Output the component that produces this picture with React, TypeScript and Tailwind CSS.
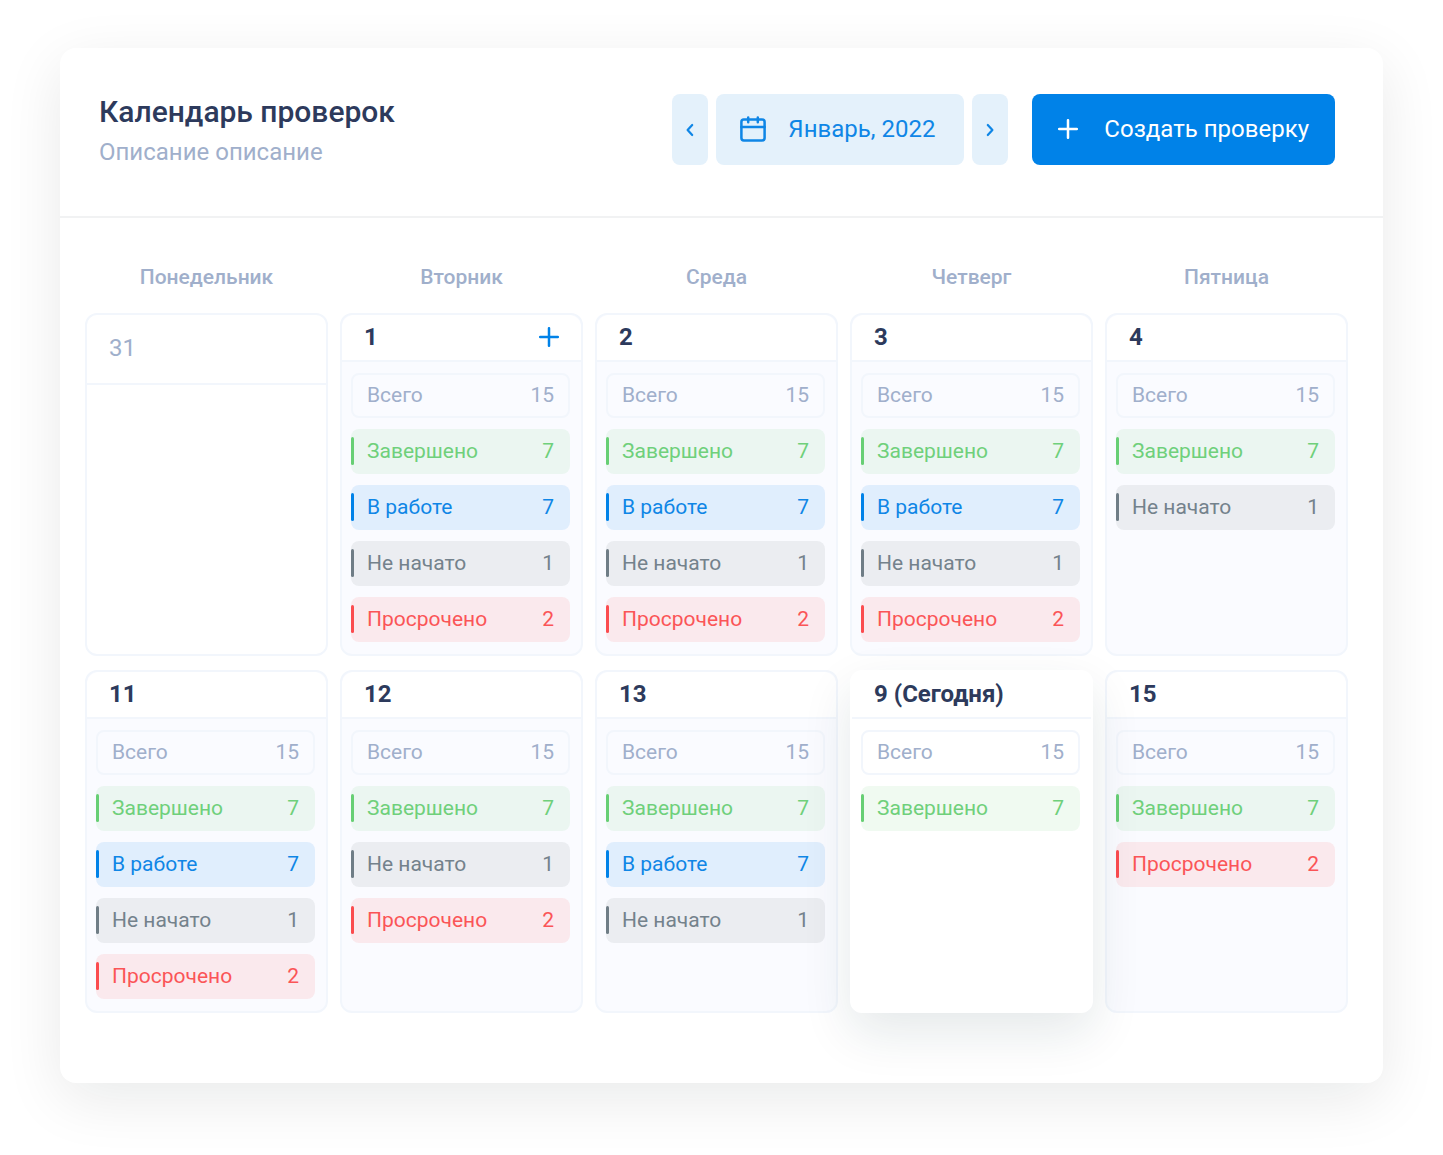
import { useState } from 'react';

type Status = 'total' | 'done' | 'progress' | 'idle' | 'overdue';

interface Day {
  label: string;
  statuses: Status[];
  outside?: boolean;
  today?: boolean;
  canAdd?: boolean;
}

const STATUSES = {
  total: {
    label: 'Всего',
    count: 15,
    chip: 'border-2 border-[#f2f6fc] px-3.5 text-[#a0afcb]',
    bar: '',
  },
  done: {
    label: 'Завершено',
    count: 7,
    chip: 'bg-[#6bd078]/10 px-4 text-[#6fd07b]',
    bar: 'bg-[#67cf74]',
  },
  progress: {
    label: 'В работе',
    count: 7,
    chip: 'bg-[#0082e8]/10 px-4 text-[#0f86e6]',
    bar: 'bg-[#0082e8]',
  },
  idle: {
    label: 'Не начато',
    count: 1,
    chip: 'bg-[#6c7a74]/10 px-4 text-[#74828c]',
    bar: 'bg-[#6f7d86]',
  },
  overdue: {
    label: 'Просрочено',
    count: 2,
    chip: 'bg-[#ff4d4f]/10 px-4 text-[#fa5557]',
    bar: 'bg-[#fb4c4f]',
  },
};

const WEEKDAYS = ['Понедельник', 'Вторник', 'Среда', 'Четверг', 'Пятница'];

const MONTHS = [
  'Январь', 'Февраль', 'Март', 'Апрель', 'Май', 'Июнь',
  'Июль', 'Август', 'Сентябрь', 'Октябрь', 'Ноябрь', 'Декабрь',
];

const DAYS: Day[] = [
  { label: '31', statuses: [], outside: true },
  { label: '1', statuses: ['total', 'done', 'progress', 'idle', 'overdue'], canAdd: true },
  { label: '2', statuses: ['total', 'done', 'progress', 'idle', 'overdue'] },
  { label: '3', statuses: ['total', 'done', 'progress', 'idle', 'overdue'] },
  { label: '4', statuses: ['total', 'done', 'idle'] },
  { label: '11', statuses: ['total', 'done', 'progress', 'idle', 'overdue'] },
  { label: '12', statuses: ['total', 'done', 'idle', 'overdue'] },
  { label: '13', statuses: ['total', 'done', 'progress', 'idle'] },
  { label: '9 (Сегодня)', statuses: ['total', 'done'], today: true },
  { label: '15', statuses: ['total', 'done', 'overdue'] },
];

function PlusIcon() {
  return (
    <svg width="20" height="20" viewBox="0 0 20 20" fill="none" stroke="currentColor" strokeWidth="2.5" strokeLinecap="round">
      <path d="M10 1.2v17.6M1.2 10h17.6" />
    </svg>
  );
}

function ChevronIcon({ direction }: { direction: 'left' | 'right' }) {
  return (
    <svg width="8" height="14" viewBox="0 0 8 14" fill="none" stroke="currentColor" strokeWidth="2.2" strokeLinecap="round" strokeLinejoin="round">
      <path d={direction === 'left' ? 'M6.2 2 1.6 7l4.6 5' : 'M1.8 2 6.4 7l-4.6 5'} />
    </svg>
  );
}

function CalendarIcon() {
  return (
    <svg width="26" height="26" viewBox="0 0 26 26" fill="none" stroke="currentColor" strokeWidth="2.5" strokeLinecap="round" strokeLinejoin="round">
      <rect x="1.4" y="3.6" width="23.2" height="20.8" rx="2.4" />
      <path d="M1.4 11h23.2M8.2 1.4v4.8M17.8 1.4v4.8" />
    </svg>
  );
}

function StatusChip({ status }: { status: Status }) {
  const { label, count, chip, bar } = STATUSES[status];

  return (
    <li className={`relative flex h-[45px] items-center justify-between rounded-lg text-[21px] ${chip}`}>
      {bar && <span className={`absolute left-0 top-2 h-7 w-[3px] rounded-xs ${bar}`} />}
      <span>{label}</span>
      <span>{count}</span>
    </li>
  );
}

function DayCell({ day }: { day: Day }) {
  if (day.outside) {
    return (
      <div className="rounded-xl border-2 border-[#f2f6fc]">
        <div className="flex h-[70px] items-center border-b-2 border-[#f2f6fc] px-[22px] pb-0.5 text-2xl text-[#a0afcb]">
          {day.label}
        </div>
      </div>
    );
  }

  return (
    <div
      className={
        day.today
          ? 'relative z-10 rounded-xl border-2 border-white bg-white shadow-[0_20px_50px_rgba(18,52,60,0.11)]'
          : 'rounded-xl border-2 border-[#f2f6fc] bg-[#fafbff]'
      }
    >
      <div className="flex h-[47px] items-center justify-between rounded-t-xl border-b-2 border-[#f2f6fc] bg-white px-[22px] pb-0.5 text-2xl font-bold text-[#2d3a5c]">
        {day.label}
        {day.canAdd && (
          <button type="button" aria-label="Добавить" className="text-[#0082e8]">
            <PlusIcon />
          </button>
        )}
      </div>
      <ul className="flex flex-col gap-[11px] pt-[11px] pr-[11px] pl-[9px]">
        {day.statuses.map((status) => (
          <StatusChip key={status} status={status} />
        ))}
      </ul>
    </div>
  );
}

export default function App() {
  const [month, setMonth] = useState(0);
  const year = 2022 + Math.floor(month / 12);
  const monthName = MONTHS[((month % 12) + 12) % 12];

  return (
    <div className="min-h-screen bg-white px-[60px] py-12 font-[Roboto,sans-serif]">
      <main className="rounded-2xl bg-white pb-[70px] shadow-[0_16px_60px_rgba(10,20,20,0.09)]">
        <header className="flex items-start justify-between border-b-2 border-[#f1f2f3] pt-[46px] pr-12 pb-12 pl-[39px]">
          <div>
            <h1 className="text-3xl font-medium text-[#2d3a5c]">Календарь проверок</h1>
            <p className="mt-1.5 text-2xl text-[#a0afcb]">Описание описание</p>
          </div>
          <div className="flex gap-6">
            <div className="flex gap-2 text-[#0f86e6]">
              <button
                type="button"
                aria-label="Предыдущий месяц"
                onClick={() => setMonth(month - 1)}
                className="flex h-[71px] w-9 items-center justify-center rounded-lg bg-[#e4f1fb]"
              >
                <ChevronIcon direction="left" />
              </button>
              <button
                type="button"
                className="flex h-[71px] min-w-[248px] items-center gap-[22px] rounded-lg bg-[#e4f1fb] px-6 pb-0.5 text-2xl"
              >
                <CalendarIcon />
                {monthName}, {year}
              </button>
              <button
                type="button"
                aria-label="Следующий месяц"
                onClick={() => setMonth(month + 1)}
                className="flex h-[71px] w-9 items-center justify-center rounded-lg bg-[#e4f1fb]"
              >
                <ChevronIcon direction="right" />
              </button>
            </div>
            <button
              type="button"
              className="flex h-[71px] items-center gap-[26px] rounded-lg bg-[#0082e8] px-[26px] pb-0.5 text-2xl text-white"
            >
              <PlusIcon />
              Создать проверку
            </button>
          </div>
        </header>

        <section className="pt-[43px] pr-[35px] pl-[25px]">
          <div className="grid grid-cols-5 gap-3 text-center text-[21px] leading-8 font-medium text-[#a0afcb]">
            {WEEKDAYS.map((weekday) => (
              <div key={weekday}>{weekday}</div>
            ))}
          </div>
          <div className="mt-5 grid auto-rows-[343px] grid-cols-5 gap-x-3 gap-y-3.5">
            {DAYS.map((day) => (
              <DayCell key={day.label} day={day} />
            ))}
          </div>
        </section>
      </main>
    </div>
  );
}
